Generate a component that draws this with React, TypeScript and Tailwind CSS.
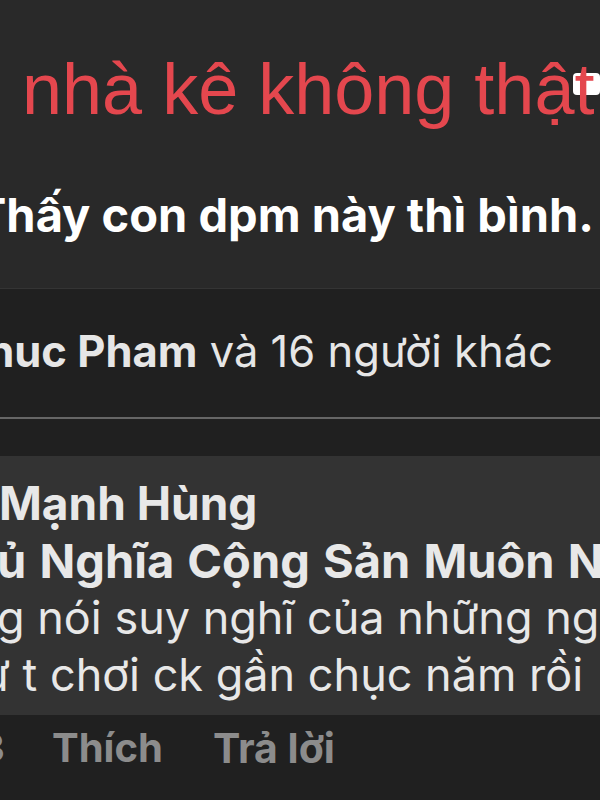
export default function App() {
  const inter = { fontFamily: 'Inter, "Noto Sans", sans-serif' };
  return (
    <div className="w-[600px] h-[800px] overflow-hidden bg-[#202020]" style={inter}>
      {/* post area */}
      <div className="h-[288px] bg-[#292929] overflow-hidden">
        <div className="pt-[53px] pl-[22px] relative whitespace-nowrap">
          <span className="absolute left-[573px] top-[73px] w-[27px] h-[22px] rounded-[4px] bg-white" />
          <span
            className="relative block text-[72px] leading-[72px] text-[#e4474e]"
            style={{ fontFamily: '"Liberation Sans", Arial, sans-serif' }}
          >
            nhà kê không thật
          </span>
        </div>
        <div className="mt-[61px] whitespace-nowrap text-[47px] leading-[57px] font-bold text-white ml-[-25px]">
          Thấy con dpm này thì bình.
        </div>
      </div>
      <div className="h-px bg-[#343434]" />
      {/* reactions */}
      <div className="pt-[34px] h-[128px] whitespace-nowrap text-[43.5px] leading-[57px] text-[#e6e6e6] ml-[-41px]">
        <span className="font-bold">Phuc Pham</span> và 16 người khác
      </div>
      <div className="h-[2px] bg-[#666666]" />
      <div className="h-[37px]" />
      {/* comment bubble */}
      <div className="h-[259px] bg-[#333333] pt-[19px] whitespace-nowrap text-[45px] leading-[57px] text-[#e8e8e8] overflow-hidden">
        <div className="font-bold text-[46px] ml-[-1px]">Mạnh Hùng</div>
        <div className="font-bold text-[47px] ml-[-3px] [word-spacing:2px]">ủ Nghĩa Cộng Sản Muôn Năm</div>
        <div className="ml-[-3px]">g nói suy nghĩ của những người</div>
        <div className="ml-[-18px]">ư t chơi ck gần chục năm rồi</div>
      </div>
      {/* actions */}
      <div className="pt-[8px] whitespace-nowrap text-[40px] leading-[50px] font-bold text-[#8c8c8c] flex">
        <span className="ml-[-21px] w-[73px]">3</span>
        <span>Thích</span>
        <span className="ml-[50px] text-[41px]">Trả lời</span>
      </div>
    </div>
  );
}
